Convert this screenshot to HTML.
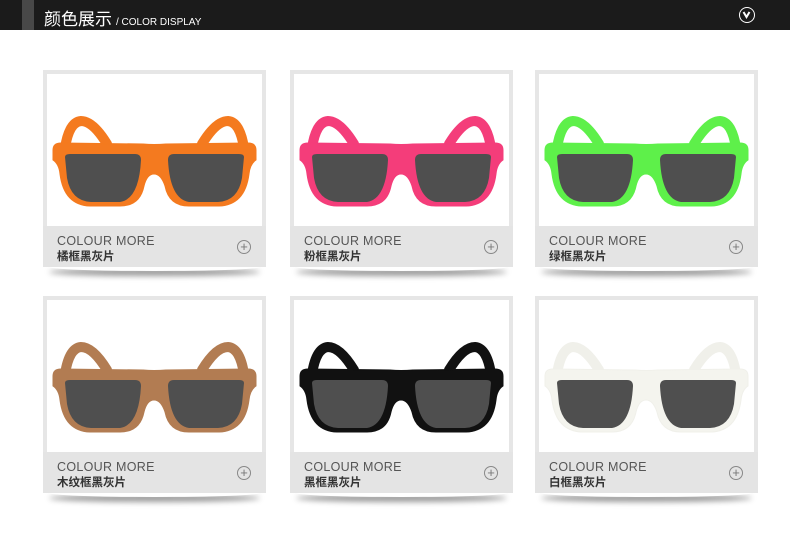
<!DOCTYPE html>
<html><head><meta charset="utf-8"><style>
*{margin:0;padding:0;box-sizing:border-box}
body{width:790px;height:536px;background:#fff;position:relative;overflow:hidden;font-family:"Liberation Sans","Noto Sans CJK SC",sans-serif}
.hdr{position:absolute;left:0;top:0;width:790px;height:30px;background:#1b1b1b}
.hdr .bar{position:absolute;left:22px;top:0;width:12px;height:30px;background:#484848}
.hdr .t{position:absolute;left:44px;top:5px;color:#fff;font-size:17px}
.hdr .t small{font-size:10px;margin-left:4px}
.hdr .ic{position:absolute;left:739px;top:7px;width:16px;height:16px;border:1.5px solid #fff;border-radius:50%}
.card{position:absolute;width:223px;height:197px;background:#e6e6e6}
.card .sh{position:absolute;left:6px;right:6px;top:193px;height:8px;border-radius:50%;box-shadow:0 5px 6px rgba(0,0,0,.4)}
.card .img{position:absolute;left:4px;top:4px;width:215px;height:152px;background:#fff}
.card .cap{position:absolute;left:0;top:156px;width:223px;height:41px;background:#e4e4e4}
.cap .a{position:absolute;left:14px;top:8px;font-size:12.5px;color:#555;letter-spacing:.3px}
.cap .b{position:absolute;left:14px;top:22px;font-size:11.5px;color:#333;font-weight:bold}
.cap .p{position:absolute;left:194px;top:14px;width:14px;height:14px;border:1px solid #888;border-radius:50%;color:#777;font-size:13px;line-height:11px;text-align:center}
</style></head><body>
<div class="hdr"><div class="bar"></div><div class="t">颜色展示<small>/ COLOR DISPLAY</small></div>
<div class="ic"><svg width="13" height="13" viewBox="0 0 13 13" style="position:absolute;left:0;top:0"><path d="M3.5 4 L6.5 9 L9.5 4" stroke="#fff" stroke-width="2" fill="none"/></svg></div></div>
<svg width="0" height="0" style="position:absolute"><defs>
<symbol id="g" viewBox="0 0 215 152">
<path d="M18 74 Q22 48 34 47 Q46 47 60 70 M197 74 Q193 48 181 47 Q169 47 155 70" fill="none" stroke-width="10" stroke-linecap="round"/>
<path d="M6 76 Q6 69 14 69 L96 70 Q107 71 119 70 L201 69 Q209 69 209 76 L209 86 Q203 90 202 100 Q198 131 172 132 L142 132 Q122 132 118 112 Q114 100 107 100 Q100 100 97 112 Q93 132 73 132 L43 132 Q17 131 13 100 Q12 90 6 86 Z"/>
</symbol>
<symbol id="l" viewBox="0 0 215 152">
<path d="M18 83 Q18 80 23 80 L88 80 Q94 80 94 86 Q92 125 73 128 L44 128 Q24 127 20 104 Z M197 83 Q197 80 192 80 L127 80 Q121 80 121 86 Q123 125 142 128 L171 128 Q191 127 195 104 Z" fill="#4f4f4f" stroke="none"/>
</symbol></defs></svg>

<div class="card" style="left:43px;top:70px"><div class="sh"></div><div class="img"><svg width="215" height="152" fill="#f47a1f" stroke="#f47a1f"><use href="#g"/><use href="#l"/></svg></div><div class="cap"><div class="a">COLOUR MORE</div><div class="b">橘框黑灰片</div><div class="p">+</div></div></div>
<div class="card" style="left:290px;top:70px"><div class="sh"></div><div class="img"><svg width="215" height="152" fill="#f43d7a" stroke="#f43d7a"><use href="#g"/><use href="#l"/></svg></div><div class="cap"><div class="a">COLOUR MORE</div><div class="b">粉框黑灰片</div><div class="p">+</div></div></div>
<div class="card" style="left:535px;top:70px"><div class="sh"></div><div class="img"><svg width="215" height="152" fill="#5ef04a" stroke="#5ef04a"><use href="#g"/><use href="#l"/></svg></div><div class="cap"><div class="a">COLOUR MORE</div><div class="b">绿框黑灰片</div><div class="p">+</div></div></div>
<div class="card" style="left:43px;top:296px"><div class="sh"></div><div class="img"><svg width="215" height="152" fill="#b27c52" stroke="#b27c52"><use href="#g"/><use href="#l"/></svg></div><div class="cap"><div class="a">COLOUR MORE</div><div class="b">木纹框黑灰片</div><div class="p">+</div></div></div>
<div class="card" style="left:290px;top:296px"><div class="sh"></div><div class="img"><svg width="215" height="152" fill="#111" stroke="#111"><use href="#g"/><use href="#l"/></svg></div><div class="cap"><div class="a">COLOUR MORE</div><div class="b">黑框黑灰片</div><div class="p">+</div></div></div>
<div class="card" style="left:535px;top:296px"><div class="sh"></div><div class="img"><svg width="215" height="152" fill="#f4f4ee" stroke="#f0f0ea"><use href="#g"/><use href="#l"/></svg></div><div class="cap"><div class="a">COLOUR MORE</div><div class="b">白框黑灰片</div><div class="p">+</div></div></div>
</body></html>
